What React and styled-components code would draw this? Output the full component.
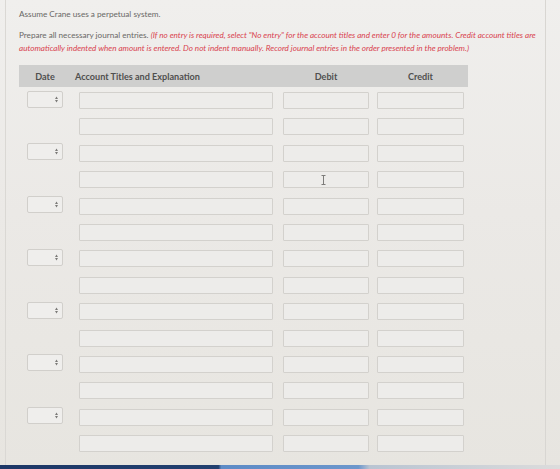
import React from "react";
import styled, { createGlobalStyle } from "styled-components";

const GlobalStyle = createGlobalStyle`
  html, body {
    margin: 0;
    padding: 0;
  }
  body {
    background: #ebe9e6;
    font-family: Lato, "Open Sans", Arial, sans-serif;
  }
`;

const Page = styled.div`
  width: 560px;
  height: 469px;
  display: flex;
  flex-direction: column;
  overflow: hidden;
  background: linear-gradient(180deg, #f0efed 0%, #ebe9e6 45%, #e7e5e0 100%);
`;

const Panel = styled.div`
  flex: 1;
  margin: 0 14px 0 5px;
  border-left: 1px solid #dad8d4;
  border-right: 1px solid #d8d6d2;
  padding: 8px 0 0 13px;
`;

const Lead = styled.p`
  margin: 0;
  font-size: 8.2px;
  line-height: 12px;
  color: #696866;
`;

const Instructions = styled.div`
  margin: 9px 0 0;
  font-size: 8.15px;
  line-height: 13px;
  color: #696866;
`;

const Line = styled.div`
  white-space: nowrap;
`;

const Note = styled.em`
  color: #d9434f;
  font-style: italic;
`;

const Journal = styled.div`
  margin-top: 10px;
  width: 449px;
`;

const Columns = styled.div`
  display: grid;
  grid-template-columns: 52px 204px 94px 91px;
  padding: 0 4px 0 8px;
  align-items: center;
`;

const HeaderBar = styled(Columns)`
  height: 22px;
  background: #cfcfce;
`;

const HeaderCell = styled.div`
  font-size: 9.1px;
  font-weight: 700;
  color: #4f4f4f;
  white-space: nowrap;
  text-align: ${(p) => (p.$left ? "left" : "center")};
  width: ${(p) => p.$w}px;
  margin-left: ${(p) => (p.$left ? "-4px" : "0")};
`;

const Body = styled.div`
  display: flex;
  flex-direction: column;
  gap: 9.4px;
  padding-top: 5px;
`;

const Row = styled(Columns)`
  height: 17px;
`;

const Field = styled.div`
  position: relative;
  box-sizing: border-box;
  height: 17px;
  width: ${(p) => p.$w}px;
  border: 1px solid #d3d1cd;
  border-radius: 1px;
  background: #edecea;
`;

const DateSelect = styled.div`
  box-sizing: border-box;
  height: 17px;
  width: 36px;
  margin-top: -3px;
  border: 1px solid #d1cfcb;
  border-radius: 2px;
  background: #efeeec;
  display: flex;
  align-items: center;
  justify-content: flex-end;
  padding-right: 4px;
`;

const Cursor = styled.svg`
  position: absolute;
  left: 37px;
  top: 3px;
`;

const Taskbar = styled.div`
  height: 4px;
  background: linear-gradient(
    90deg,
    #1d3766 0%,
    #22406f 39%,
    #5d8bc6 39.5%,
    #6d97cc 64%,
    #b9c4d2 66%,
    #dcdcdc 100%
  );
`;

function Spinner() {
  return (
    <svg width="3" height="7" viewBox="0 0 3 7">
      <path d="M1.5 0.5 L3 3 L0 3 Z" fill="#7b7a78" />
      <path d="M1.5 6.5 L3 4 L0 4 Z" fill="#7b7a78" />
    </svg>
  );
}

const rows = Array.from({ length: 14 }, (_, i) => i);

export default function App() {
  return (
    <>
      <GlobalStyle />
      <Page>
        <Panel>
          <Lead>Assume Crane uses a perpetual system.</Lead>
          <Instructions>
            <Line>
              Prepare all necessary journal entries.{" "}
              <Note>
                (If no entry is required, select "No entry" for the account titles and enter 0
                for the amounts. Credit account titles are
              </Note>
            </Line>
            <Line>
              <Note>
                automatically indented when amount is entered. Do not indent manually. Record
                journal entries in the order presented in the problem.)
              </Note>
            </Line>
          </Instructions>
          <Journal>
            <HeaderBar>
              <HeaderCell $w={36}>Date</HeaderCell>
              <HeaderCell $left $w={200}>Account Titles and Explanation</HeaderCell>
              <HeaderCell $w={86}>Debit</HeaderCell>
              <HeaderCell $w={87}>Credit</HeaderCell>
            </HeaderBar>
            <Body>
              {rows.map((i) => (
                <Row key={i}>
                  {i % 2 === 0 ? (
                    <DateSelect>
                      <Spinner />
                    </DateSelect>
                  ) : (
                    <span />
                  )}
                  <Field $w={194} />
                  <Field $w={86}>
                    {i === 3 && (
                      <Cursor width="5" height="10" viewBox="0 0 5 10">
                        <path
                          d="M0.5 0.5 H4.5 M2.5 0.5 V9.5 M0.5 9.5 H4.5"
                          stroke="#7d7c7a"
                          strokeWidth="1"
                          fill="none"
                        />
                      </Cursor>
                    )}
                  </Field>
                  <Field $w={87} />
                </Row>
              ))}
            </Body>
          </Journal>
        </Panel>
        <Taskbar />
      </Page>
    </>
  );
}
